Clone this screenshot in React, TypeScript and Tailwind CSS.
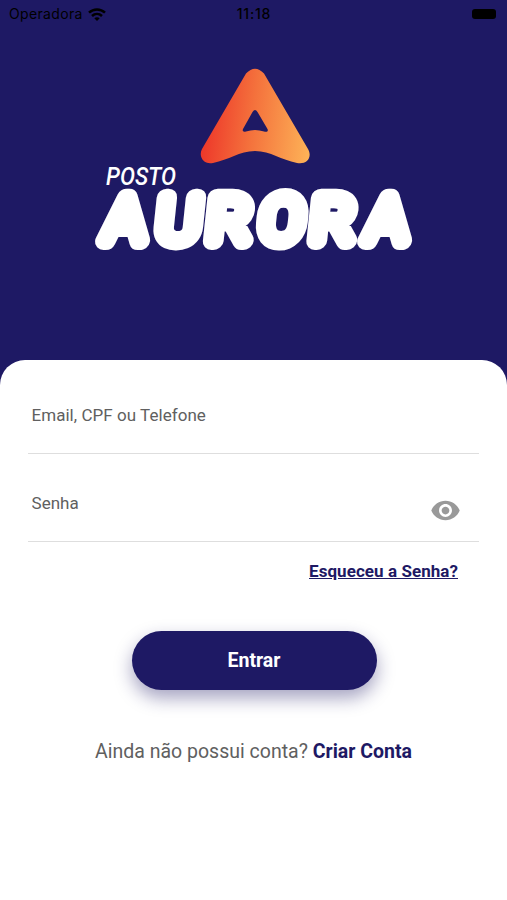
import { useState } from "react";
import { MdVisibility, MdVisibilityOff } from "react-icons/md";

const letters = [
  { char: "A", x: 124.5, stretch: 1.05 },
  { char: "U", x: 179, stretch: 1.04 },
  { char: "R", x: 229.5, stretch: 1.06 },
  { char: "O", x: 282, stretch: 1.02 },
  { char: "R", x: 333, stretch: 1.06 },
  { char: "A", x: 386.5, stretch: 1.05 },
];

const StatusBar = () => (
  <div className="h-7 pl-[9px] pr-[11px] grid grid-cols-3 items-center font-['Inter','Roboto',sans-serif] text-black">
    <div className="flex items-center gap-[5px]">
      <span className="text-[14px] leading-none tracking-[0.35px]">Operadora</span>
      <svg width="18" height="13" viewBox="0 0 18 13" fill="none" stroke="currentColor" strokeWidth="2.6">
        <path d="M1 4.6C5.5.4 12.500.4 17 4.600" />
        <path d="M4 8c2.900-2.600 7.100-2.600 10 0" />
        <path d="M9 13 6.300 10.300c1.500-1.300 3.900-1.300 5.400 0z" fill="currentColor" stroke="none" />
      </svg>
    </div>
    <span className="text-center text-[14px] leading-none font-medium tracking-[0.8px] pl-[3px]">11:18</span>
    <div className="justify-self-end w-[24px] h-[10px] rounded-[3px] bg-black" />
  </div>
);

const Logo = () => (
  <svg className="block" width="507" height="332" viewBox="0 28 507 332" aria-label="Posto Aurora">
    <defs>
      <linearGradient id="flame" x1="0" y1="0.700" x2="1" y2="0.800">
        <stop offset="0" stopColor="#ed3529" />
        <stop offset="0.450" stopColor="#f4713c" />
        <stop offset="1" stopColor="#fdb257" />
      </linearGradient>
    </defs>
    <path
      d="M246 73.500Q255 64 264 73.500L308 149C313 158 306 165 297 163C281 160 271 151 255 151C239 151 229 160 213 163C204 165 198 157 202 149ZM252.500 112L243 129C242 132 244 132 246 131.500Q255 128.500 264 131.500C267 132.500 268.500 131 267.500 129L257.500 112Q255 108 252.500 112Z"
      fill="url(#flame)"
      fillRule="evenodd"
    />
    <text
      x="106"
      y="184.500"
      textLength="70"
      lengthAdjust="spacingAndGlyphs"
      className="font-['Roboto',sans-serif] text-[25.5px] font-medium italic"
      fill="#fff"
    >
      POSTO
    </text>
    <g
      className="font-['Roboto',sans-serif] text-[61px] font-thin"
      fill="#fff"
      stroke="#fff"
      strokeWidth="18"
      strokeLinejoin="round"
      strokeLinecap="round"
      textAnchor="middle"
    >
      {letters.map((l) => (
        <text key={l.x} transform={`translate(${l.x - 2} 240.500) skewX(-6) scale(${l.stretch} 1)`}>
          {l.char}
        </text>
      ))}
    </g>
  </svg>
);

const App = () => {
  const [visible, setVisible] = useState(false);

  return (
    <div className="w-full h-[900px] overflow-hidden bg-[#1e1964] font-['Roboto',sans-serif]">
      <StatusBar />
      <Logo />

      <main className="h-[540px] rounded-t-[25px] bg-white px-7">
        {/* Fields */}
        <div className="h-[94px] pt-[37px] border-b border-[#dedede]">
          <input
            type="text"
            placeholder="Email, CPF ou Telefone"
            className="block w-full h-9 pl-[3.500px] text-[17px] tracking-[0.04px] text-[#606060] placeholder:text-[#606060] outline-none"
          />
        </div>
        <div className="h-[88px] pt-[31px] flex border-b border-[#dedede]">
          <input
            type={visible ? "text" : "password"}
            placeholder="Senha"
            className="block flex-1 h-9 pl-[3.500px] text-[17px] tracking-[0.04px] text-[#606060] placeholder:text-[#606060] outline-none"
          />
          <button
            type="button"
            onClick={() => setVisible(!visible)}
            aria-label="Mostrar senha"
            className="mt-[10px] mr-[18px] size-[31px] text-[#999]"
          >
            {visible ? <MdVisibilityOff size={31} /> : <MdVisibility size={31} />}
          </button>
        </div>

        <div className="pt-[16px] pr-[21px] text-right">
          <a href="#senha" className="block text-[17px] leading-[26px] tracking-[0.06px] font-bold text-[#1e1964] underline">
            Esqueceu a Senha?
          </a>
        </div>

        <button
          type="button"
          className="block mt-[47px] ml-[103.5px] w-[245px] h-[59px] rounded-full bg-[#1e1964] text-[19.500px] font-bold text-white shadow-[0_8px_18px_rgba(30,25,100,0.4)]"
        >
          Entrar
        </button>

        <p className="mt-[47px] text-center text-[19.5px] leading-[30px] text-[#606060]">
          Ainda não possui conta?{" "}
          <a href="#conta" className="font-bold text-[#1e1964]">
            Criar Conta
          </a>
        </p>
      </main>
    </div>
  );
};

export default App;
